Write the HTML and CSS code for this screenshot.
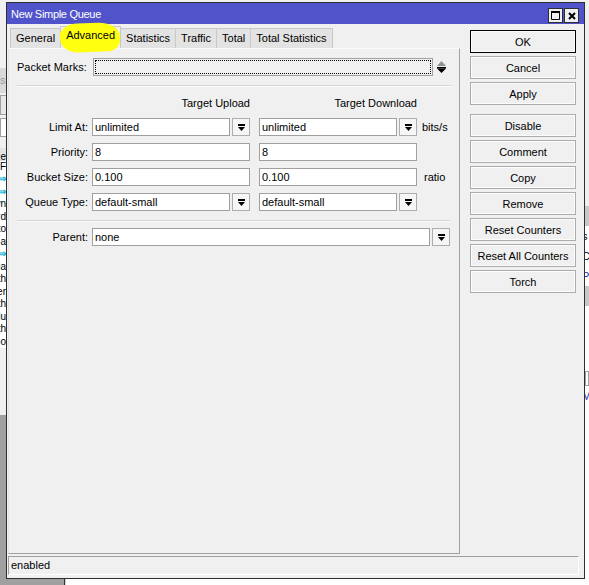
FILE: index.html
```html
<!DOCTYPE html>
<html lang="en">
<head>
    <meta charset="UTF-8">
    <title>New Simple Queue</title>
    <link rel="stylesheet" href="styles.css">
</head>
<body>
    <div class="desktop">
        <!-- app window behind the dialog -->
        <div class="bg-app">
            <div class="bg-head"></div>
            <div class="bg-tool">ss</div>
            <div class="bg-box"></div>
            <div class="bg-box white"></div>
            <div class="bg-list">
                <div class="bg-row head">Name</div>
                <div class="bg-row">#F</div>
                <div class="bg-row arrow">&#8658;</div>
                <div class="bg-row arrow">&#8658;</div>
                <div class="bg-row">queue-down</div>
                <div class="bg-row">forward</div>
                <div class="bg-row">limit-to</div>
                <div class="bg-row">pppoe-a</div>
                <div class="bg-row arrow">&#8658;</div>
                <div class="bg-row">media</div>
                <div class="bg-row">with</div>
                <div class="bg-row">user</div>
                <div class="bg-row">with</div>
                <div class="bg-row">plu</div>
                <div class="bg-row">with</div>
                <div class="bg-row">foo</div>
            </div>
            <div class="bg-rest"></div>
            <div class="bg-gray"></div>
        </div>
        <div class="bg-floor"></div>
        <div class="bg-right">
            <div class="r-top"></div>
            <div class="r-band"></div>
            <div class="r-white">s</div>
            <div class="r-white">C</div>
            <div class="r-white blue">P</div>
            <div class="r-band"></div>
            <div class="r-white tall"></div>
            <div class="r-box"></div>
            <div class="r-white blue">M</div>
        </div>

        <div class="window">
            <div class="titlebar">
                <span class="title">New Simple Queue</span>
                <div class="title-btns">
                    <span class="tbtn">
                        <svg width="9" height="9" viewBox="0 0 9 9"><path d="M0.5 0.5h8v8h-8z" fill="none" stroke="#000"/><rect x="0" y="0" width="9" height="2" fill="#000"/></svg>
                    </span>
                    <span class="tbtn">
                        <svg width="8" height="8" viewBox="0 0 8 8"><path d="M1 1L7 7M7 1L1 7" stroke="#000" stroke-width="2"/></svg>
                    </span>
                </div>
            </div>

            <div class="main">
                <div class="left">
                    <div class="tabs">
                        <div class="tab">General</div>
                        <div class="tab active"><span class="marker"></span><span class="tab-label">Advanced</span></div>
                        <div class="tab">Statistics</div>
                        <div class="tab">Traffic</div>
                        <div class="tab">Total</div>
                        <div class="tab">Total Statistics</div>
                    </div>

                    <div class="panel">
                        <div class="pm-row">
                            <label class="pm-label">Packet Marks:</label>
                            <div class="input pm-input"></div>
                            <svg class="spin" width="9" height="12" viewBox="0 0 9 12"><path d="M4.5 0L9 5H0z" fill="#8c978c"/><rect x="0" y="6" width="9" height="1.5" fill="#000"/><path d="M0 7.5h9L4.5 12z" fill="#000"/></svg>
                        </div>

                        <div class="sep"></div>

                        <div class="row heads">
                            <span class="label"></span>
                            <span class="col head">Target Upload</span>
                            <span class="col col2 head">Target Download</span>
                        </div>

                        <div class="row">
                            <label class="label">Limit At:</label>
                            <div class="col combo">
                                <div class="input">unlimited</div>
                                <span class="drop"><svg width="7" height="7" viewBox="0 0 7 7"><rect width="7" height="2"/><path d="M0 3h7L3.5 7z"/></svg></span>
                            </div>
                            <div class="col col2 combo">
                                <div class="input">unlimited</div>
                                <span class="drop"><svg width="7" height="7" viewBox="0 0 7 7"><rect width="7" height="2"/><path d="M0 3h7L3.5 7z"/></svg></span>
                            </div>
                            <span class="unit">bits/s</span>
                        </div>

                        <div class="row">
                            <label class="label">Priority:</label>
                            <div class="col input">8</div>
                            <div class="col col2 input">8</div>
                        </div>

                        <div class="row">
                            <label class="label">Bucket Size:</label>
                            <div class="col input">0.100</div>
                            <div class="col col2 input">0.100</div>
                            <span class="unit ratio">ratio</span>
                        </div>

                        <div class="row">
                            <label class="label">Queue Type:</label>
                            <div class="col combo">
                                <div class="input">default-small</div>
                                <span class="drop"><svg width="7" height="7" viewBox="0 0 7 7"><rect width="7" height="2"/><path d="M0 3h7L3.5 7z"/></svg></span>
                            </div>
                            <div class="col col2 combo">
                                <div class="input">default-small</div>
                                <span class="drop"><svg width="7" height="7" viewBox="0 0 7 7"><rect width="7" height="2"/><path d="M0 3h7L3.5 7z"/></svg></span>
                            </div>
                        </div>

                        <div class="sep sep2"></div>

                        <div class="row parent">
                            <label class="label">Parent:</label>
                            <div class="combo wide">
                                <div class="input">none</div>
                                <span class="drop"><svg width="7" height="7" viewBox="0 0 7 7"><rect width="7" height="2"/><path d="M0 3h7L3.5 7z"/></svg></span>
                            </div>
                        </div>
                    </div>
                </div>

                <div class="buttons">
                    <button class="btn default">OK</button>
                    <button class="btn">Cancel</button>
                    <button class="btn spaced">Apply</button>
                    <button class="btn">Disable</button>
                    <button class="btn">Comment</button>
                    <button class="btn">Copy</button>
                    <button class="btn">Remove</button>
                    <button class="btn">Reset Counters</button>
                    <button class="btn">Reset All Counters</button>
                    <button class="btn">Torch</button>
                </div>
            </div>

            <div class="statusbar">enabled</div>
        </div>
    </div>
</body>
</html>
```

FILE: styles.css
```css
:root {
    --win-bg: #f0f0f0;
    --title-bg: #5053c9;
    --line: #a0a0a0;
    --tab-bg: #e3e3e3;
    --tab-line: #c8c8c8;
    --marker: #ffff10;
}

* {
    box-sizing: border-box;
}

body {
    margin: 0;
    font-family: "Liberation Sans", Arial, sans-serif;
    font-size: 11px;
    color: #000;
    background: var(--win-bg);
}

.desktop {
    position: relative;
    width: 589px;
    height: 585px;
    overflow: hidden;
    background: var(--win-bg);
}

/* ---------- background app ---------- */

.bg-app {
    position: absolute;
    left: 0;
    top: 0;
    width: 64px;
    height: 585px;
    display: flex;
    flex-direction: column;
    background: var(--win-bg);
}

.bg-head {
    height: 68px;
}

.bg-tool {
    height: 25px;
    background: #d9d9d9;
    color: #9a9a9a;
    text-align: right;
    padding-right: 56px;
    line-height: 25px;
}

.bg-box {
    height: 20px;
    margin-top: 2px;
    border: 1px solid var(--line);
    background: #e6e6e6;
}

.bg-box.white {
    height: 19px;
    margin-top: 3px;
    background: #fff;
}

.bg-list {
    margin-top: 11px;
    background: #fff;
}

.bg-row {
    height: 12.5px;
    line-height: 12px;
    width: 60px;
    margin-left: -54px;
    font-size: 10px;
    text-align: right;
    white-space: nowrap;
    overflow: hidden;
}

.bg-row.head {
    background: #e4e4e4;
}

.bg-row.arrow {
    color: #22b5d6;
    font-weight: bold;
}

.bg-rest {
    flex: 1;
}

.bg-gray {
    height: 170px;
    background: var(--line);
}

.bg-floor {
    position: absolute;
    left: 64px;
    top: 560px;
    width: 525px;
    height: 25px;
    background: #fff;
    border-left: 1px solid #333;
    box-shadow: inset 1px 0 0 #d0d0d0;
}

.bg-right {
    position: absolute;
    left: 585px;
    top: 0;
    width: 4px;
    height: 585px;
    display: flex;
    flex-direction: column;
    background: #fff;
    overflow: hidden;
}

.r-top {
    height: 206px;
    background: var(--win-bg);
}

.r-band {
    height: 20px;
    background: #c8c8c8;
}

.r-white {
    height: 20px;
    line-height: 20px;
    background: #fff;
    margin-left: -3px;
}

.r-white.blue {
    color: #1c2a9a;
}

.r-white.tall {
    height: 65px;
}

.r-box {
    height: 15px;
    border: 1px solid var(--line);
}

/* ---------- dialog window ---------- */

.window {
    position: absolute;
    left: 6px;
    top: 2px;
    width: 579px;
    height: 577px;
    border: 1px solid #2f2f2f;
    background: var(--win-bg);
    display: flex;
    flex-direction: column;
}

.titlebar {
    height: 21px;
    flex: none;
    background: var(--title-bg);
    display: flex;
    align-items: flex-start;
}

.title {
    color: #fff;
    padding: 5px 0 0 4px;
    line-height: 13px;
    letter-spacing: -0.3px;
}

.title-btns {
    margin-left: auto;
    margin-right: 5px;
    margin-top: 5px;
    display: flex;
    gap: 1px;
}

.tbtn {
    width: 15px;
    height: 15px;
    border: 1px solid #2f2f2f;
    background: var(--win-bg);
    display: flex;
    align-items: center;
    justify-content: center;
}

.main {
    flex: 1;
    display: flex;
    padding: 4px 0 0 1px;
    min-height: 0;
}

.left {
    width: 452px;
    display: flex;
    flex-direction: column;
}

.tabs {
    height: 20px;
    flex: none;
    display: flex;
    align-items: flex-end;
    padding-left: 2px;
}

.tab {
    height: 20px;
    padding: 0 5px;
    line-height: 19px;
    border: 1px solid var(--tab-line);
    border-bottom: none;
    margin-right: -1px;
    background: var(--tab-bg);
    white-space: nowrap;
}

.tab.active {
    position: relative;
    height: 22px;
    padding: 0 5px;
    line-height: 17px;
    background: var(--win-bg);
    z-index: 1;
}

.marker {
    position: absolute;
    left: -1px;
    top: -4px;
    width: 60px;
    height: 29px;
    background: var(--marker);
    border-radius: 18px 22px 12px 18px / 12px 14px 12px 14px;
    transform: rotate(-2deg);
}

.tab-label {
    position: relative;
}

.panel {
    flex: 1;
    border: 1px solid var(--line);
    border-top-color: #fafafa;
    border-left-color: #e2e2e2;
    padding: 9px 0 0 8px;
}

.pm-row {
    display: flex;
    align-items: center;
    height: 18px;
}

.pm-label {
    width: 76px;
}

.input {
    height: 18px;
    border: 1px solid var(--line);
    background: #fff;
    padding: 0 2px;
    line-height: 16px;
    white-space: nowrap;
    overflow: hidden;
}

.pm-input {
    width: 340px;
    background: var(--win-bg);
    outline: 1px dotted #000;
    outline-offset: -3px;
}

.spin {
    margin-left: 4px;
}

.sep {
    margin: 9px 8px 0 0;
    border-top: 1px solid #d6d6d6;
    border-bottom: 1px solid #fbfbfb;
}

.sep2 {
    margin-top: 9px;
}

.row {
    display: flex;
    align-items: center;
    height: 18px;
    margin-top: 7px;
}

.row.heads + .row {
    margin-top: 6px;
}

.row.parent {
    margin-top: 6px;
}

.label {
    width: 71px;
    margin-right: 4px;
    text-align: right;
    white-space: nowrap;
}

.col {
    width: 158px;
}

.col2 {
    margin-left: 9px;
}

.head {
    text-align: right;
    line-height: 18px;
}

.combo {
    display: flex;
    gap: 2px;
}

.combo .input {
    flex: 1;
}

.combo.wide {
    width: 358px;
}

.drop {
    width: 18px;
    height: 18px;
    flex: none;
    border: 1px solid #adadad;
    background: #f6f6f6;
    display: flex;
    align-items: center;
    justify-content: center;
}

.unit {
    margin-left: 5px;
}

.unit.ratio {
    margin-left: 7px;
}

/* ---------- buttons ---------- */

.buttons {
    width: 106px;
    margin-left: 10px;
    padding-top: 2px;
    display: flex;
    flex-direction: column;
}

.btn {
    height: 23px;
    margin-bottom: 3px;
    border: 1px solid #acacac;
    background: var(--win-bg);
    box-shadow: inset 0 0 0 1px #fcfcfc;
    font-family: "Liberation Sans", Arial, sans-serif;
    font-size: 11px;
    color: #000;
    padding: 0;
}

.btn.default {
    border-color: #000;
}

.btn.spaced {
    margin-bottom: 9px;
}

.statusbar {
    height: 19px;
    flex: none;
    margin: 2px 5px 3px 1px;
    border: 1px solid;
    border-color: var(--line) #fff #fff var(--line);
    padding-left: 2px;
    line-height: 17px;
}
```
